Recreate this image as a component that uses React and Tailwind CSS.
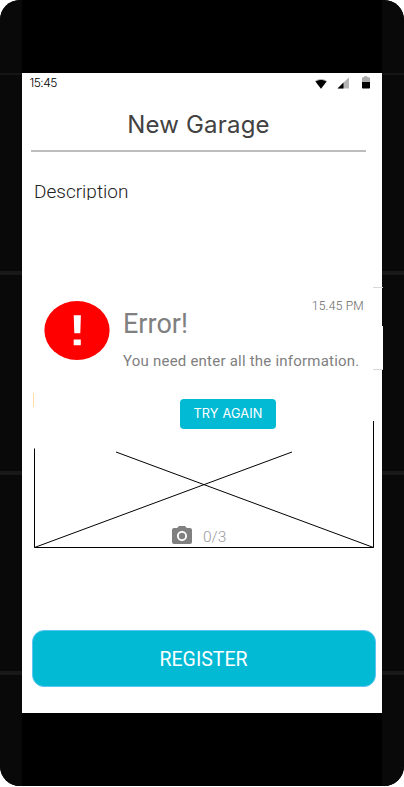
function StatusIcons() {
  return (
    <svg className="h-4 w-[62px]" viewBox="0 0 62 16" aria-hidden="true">
      <path d="M3 6.1C6.5 3.3 11.5 3.3 15 6.1L9 13.8Z" fill="#aaaaaa" />
      <path d="M3.5 6.5C7 4.4 11 4.4 14.5 6.5L9 13.8Z" fill="#000" />
      <path d="M25.5 13.5L37 2.3V13.5Z" fill="#b5b5b5" />
      <path d="M25.5 13.5L31.5 7.6V13.5Z" fill="#000" />
      <path d="M50 7.8V3.3Q50 2.3 51 2.3H51.6Q52.3 1.1 53.7 1.1Q55.1 1.1 55.8 2.3H57Q58 2.3 58 3.3V7.8Z" fill="#aaaaaa" />
      <path d="M50 7H58V12.8Q58 13.5 57.3 13.5H50.7Q50 13.5 50 12.8Z" fill="#000" />
    </svg>
  );
}

function SideRail() {
  return (
    <div className="flex w-[22px] flex-col bg-[#090909]">
      <div className="mt-[73px] h-[2px] bg-[#151515]" />
      <div className="mt-[196px] h-[4px] bg-[#181818]" />
      <div className="mt-[196px] h-[4px] bg-[#181818]" />
      <div className="mt-[196px] h-[4px] bg-[#181818]" />
    </div>
  );
}

function ErrorNotice() {
  return (
    <section className="flex h-[176px] flex-col">
      <div className="flex pl-[22px]">
        <svg className="mt-[24px] h-[60px] w-[66px] shrink-0" viewBox="0 0 66 60" aria-hidden="true">
          <ellipse cx="33" cy="30.4" rx="32.6" ry="29.5" fill="#ff0000" />
          <path d="M29.7 15.2H36.9L36.3 33.3H30.3ZM29.7 39.5H36.8V45.3H29.7Z" fill="#fff" />
        </svg>
        <div className="ml-[13px] flex w-[241px] flex-col">
          <span className="mt-[22px] self-end text-[12px] leading-4 font-light tracking-[0.25px] text-[#666666]">15.45 PM</span>
          <h2 className="-mt-[6px] text-[27px] leading-[32px] font-normal text-[#808080]">Error!</h2>
          <p className="mt-[12px] text-[15px] leading-[18px] whitespace-nowrap tracking-[0.22px] text-[#808080]">You need enter all the information.</p>
        </div>
      </div>
      <button className="mt-[29px] ml-[158px] flex h-[30px] w-[96px] shrink-0 items-center justify-center rounded-[4px] bg-[#03bad5] font-[Inter,sans-serif] text-[12.75px] tracking-[0.15px] text-white">TRY AGAIN</button>
    </section>
  );
}

export default function App() {
  return (
    <div className="h-[787px] w-[404px] overflow-hidden bg-white font-[Roboto,sans-serif]">
      <div className="flex h-[786px] overflow-hidden rounded-[20px] bg-black">
        <SideRail />
        <main className="relative mt-[73px] flex h-[640px] w-[360px] flex-col bg-white">
          <div className="flex h-5 items-center justify-between pr-[8px] pl-[7.5px]">
            <span className="font-[Inter,sans-serif] text-[12px] leading-5 font-light tracking-[-0.5px] text-black">15:45</span>
            <StatusIcons />
          </div>
          <h1 className="mx-[9px] mr-[16px] flex h-[59px] items-center justify-center border-b-2 border-[#bdbdbd] pt-[6px] font-[Inter,sans-serif] text-[24px] leading-8 font-normal tracking-[0.2px] text-[#424242]">New Garage</h1>
          <div className="mt-[29px] h-[19px] overflow-hidden pl-[12px] text-[19px] leading-[22px] font-light text-[#212121]">Description</div>
          <div className="mt-[76px] h-[176px]">
            <ErrorNotice />
          </div>
          <div className="relative -mt-[31px] h-[128px] w-[360px]">
            <svg className="h-[128px] w-[360px]" viewBox="0 0 360 128" fill="none" stroke="#000" aria-hidden="true">
              <path d="M12.5 27.5V126.5H351.5V0" />
              <path d="M94 31L351.5 126.5M12.5 126.5L270 31" strokeWidth="1" />
            </svg>
            <div className="absolute bottom-0 left-[148px] flex h-6 items-center gap-[9px]">
              <svg className="mb-[2px] h-6 w-6" viewBox="0 0 24 24" fill="#808080" aria-hidden="true">
                <circle cx="12" cy="12" r="3.2" />
                <path d="M9 2 7.17 4H4c-1.1 0-2 .9-2 2v12c0 1.1.9 2 2 2h16c1.1 0 2-.9 2-2V6c0-1.1-.9-2-2-2h-3.17L15 2H9zm3 15c-2.76 0-5-2.24-5-5s2.24-5 5-5 5 2.24 5 5-2.24 5-5 5z" />
              </svg>
              <span className="text-[15.5px] leading-6 font-light text-[#999999]">0/3</span>
            </div>
          </div>
          <button className="mt-[81px] ml-[10px] flex h-[57px] w-[344px] items-center justify-center rounded-[12px] border border-[#5bc5f0] bg-[#03bad5] pt-[3px] pr-px text-[19.5px] text-white">REGISTER</button>
          <i className="absolute top-[320px] left-[11px] h-[14px] w-px bg-[#ffe0a0]" />
          <i className="absolute top-[214px] left-[351px] h-px w-[10px] bg-[#d7d7d7]" />
          <i className="absolute top-[253px] left-[360px] h-[43px] w-px bg-white" />
          <i className="absolute top-[296px] left-[351px] h-px w-[10px] bg-[#d7d7d7]" />
        </main>
        <SideRail />
      </div>
    </div>
  );
}
